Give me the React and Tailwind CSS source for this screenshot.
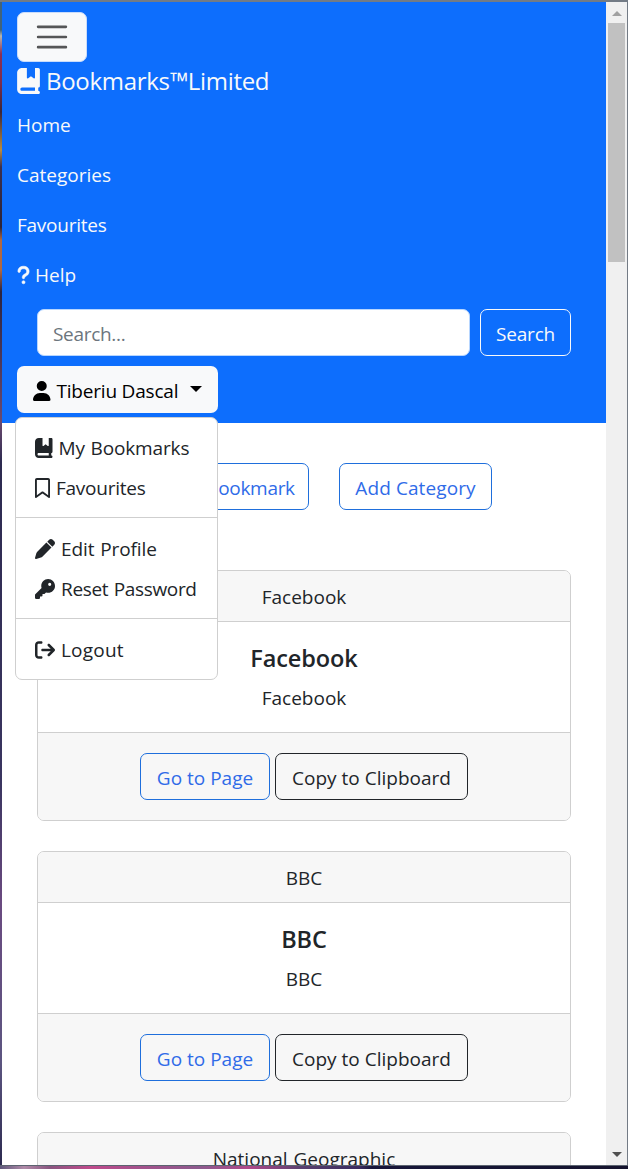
import { FaBookBookmark, FaQuestion, FaUser, FaRegBookmark, FaPen, FaKey, FaArrowRightFromBracket } from "react-icons/fa6";

function Card({ name }) {
  return (
    <article className="flex h-[251px] shrink-0 flex-col overflow-hidden rounded-[7px] border border-[#cfcfcf] bg-white">
      <header className="flex h-[51px] shrink-0 items-center justify-center border-b border-[#cfcfcf] bg-[#f7f7f7] pt-0.5">
        <span>{name}</span>
      </header>
      <div className="flex h-[110px] shrink-0 flex-col items-center pt-[18px]">
        <h5 className="h-9 text-[23.5px] leading-9 font-semibold tracking-[-0.1px]">{name}</h5>
        <p className="h-10 leading-[44px]">{name}</p>
      </div>
      <footer className="flex h-[88px] shrink-0 justify-center gap-[5px] border-t border-[#cfcfcf] bg-[#f7f7f7] pt-5">
        <button className="h-[47px] w-[130px] rounded-[7px] border border-[#1f6fdc] pt-1 text-[#2f6be8]">Go to Page</button>
        <button className="h-[47px] w-[193px] rounded-[7px] border border-[#212529] pt-1">Copy to Clipboard</button>
      </footer>
    </article>
  );
}

function MenuItem({ icon: Icon, iconClass, textClass, children }) {
  return (
    <a className="flex h-10 items-center pl-[19px]">
      <Icon className={iconClass} />
      <span className={textClass}>{children}</span>
    </a>
  );
}

export default function App() {
  return (
    <div className="flex h-[1169px] w-[628px] flex-col overflow-hidden bg-[#737b85] pt-0.5 font-['Open_Sans',sans-serif] text-[19px] tracking-[0px] text-[#212529] [word-spacing:1px]">
      <div className="flex h-[1163px] shrink-0">
        <div className="w-0.5 shrink-0 bg-[linear-gradient(#41637c_0_28px,#b9b5ae_34px,#8b2f55_52px,#7d2c4c_80px,#3b2638_110px,#b98a3e_148px,#3b3050_165px,#2c2438_225px,#b0673f_238px_268px,#2b2440_290px,#6b4a70_420px,#2d2a50_460px,#3a3560_780px,#6a4a80_900px,#5c5580_1060px,#2c2a50)]" />
        <main className="relative flex w-[604px] shrink-0 flex-col overflow-hidden bg-white">
          <nav className="flex h-[421px] shrink-0 flex-col bg-[#0d6efd] px-[15px] pt-2.5 text-[#f8f9fa]">
            <button className="flex h-[50px] w-[70px] shrink-0 items-center justify-center rounded-[7px] border border-[#c9dcfb] bg-[#f8f9fa]">
              <svg viewBox="0 0 30 30" className="h-[38px] w-[38px] fill-none stroke-[#555657] stroke-2 [stroke-linecap:round]">
                <path d="M4 7h22M4 15h22M4 23h22" />
              </svg>
            </button>
            <a className="flex h-[38px] shrink-0 items-center text-[24px] tracking-[-0.3px]">
              <FaBookBookmark className="mr-[6px] h-[26px] w-[23px]" />
              <span>Bookmarks™Limited</span>
            </a>
            <a className="flex h-[50px] shrink-0 items-center">Home</a>
            <a className="flex h-[50px] shrink-0 items-center">Categories</a>
            <a className="flex h-[50px] shrink-0 items-center tracking-[-0.25px]">Favourites</a>
            <a className="flex h-[50px] shrink-0 items-center">
              <FaQuestion className="mr-[5px] h-5 w-[13px] stroke-current stroke-[14]" />
              <span>Help</span>
            </a>
            <form className="mt-[9px] flex h-[47px] shrink-0 gap-2.5 px-5">
              <div className="flex w-[433px] items-center rounded-[7px] border border-[#b7d6ff] bg-white pt-1 pl-[15px] tracking-[-0.3px] text-[#6c757d]">Search...</div>
              <button type="button" className="w-[91px] rounded-[7px] border border-[#f8f9fa] pt-1 tracking-[-0.2px]">Search</button>
            </form>
            <button className="mt-2.5 flex h-[47px] w-[201px] shrink-0 items-center rounded-[7px] bg-[#f8f9fa] pt-0.5 pl-4 text-black">
              <FaUser className="mr-[6px] h-5 w-[17.5px]" />
              <span className="pt-0.5 tracking-[-0.2px]">Tiberiu Dascal</span>
              <svg viewBox="0 0 12 6" className="mb-1 ml-auto mr-4 h-1.5 w-3"><path d="M0 0h12L6 6z" /></svg>
            </button>
          </nav>
          <div className="flex h-[147px] shrink-0 gap-[30px] pt-10 pl-[151px] tracking-[0.1px] text-[#2f6be8]">
            <button className="h-[47px] w-[156px] rounded-[7px] border border-[#1f6fdc] pt-1 tracking-[-0.3px]">Add Bookmark</button>
            <button className="h-[47px] w-[153px] rounded-[7px] border border-[#1f6fdc] pt-1">Add Category</button>
          </div>
          <section className="flex flex-col gap-[30px] px-[35px]">
            <Card name="Facebook" />
            <Card name="BBC" />
            <Card name="National Geographic" />
          </section>
          <div className="absolute top-[415px] left-[13px] flex h-[263px] w-[203px] flex-col rounded-[7px] border border-[#cfcfcf] bg-white pt-2.5">
            <MenuItem icon={FaBookBookmark} iconClass="mr-[6px] h-5 w-[17.5px]" textClass="tracking-[-0.15px]">My Bookmarks</MenuItem>
            <MenuItem icon={FaRegBookmark} iconClass="mr-[6px] h-5 w-[15px]" textClass="tracking-[-0.25px]">Favourites</MenuItem>
            <hr className="mt-[9px] mb-[11px] border-[#cfcfcf]" />
            <MenuItem icon={FaPen} iconClass="mr-[6px] h-5 w-5" textClass="tracking-[-0.1px]">Edit Profile</MenuItem>
            <MenuItem icon={FaKey} iconClass="mr-[6px] h-5 w-5" textClass="tracking-[-0.35px]">Reset Password</MenuItem>
            <hr className="mt-[9px] mb-[11px] border-[#cfcfcf]" />
            <MenuItem icon={FaArrowRightFromBracket} iconClass="mr-[6px] h-5 w-5" textClass="tracking-[0.2px]">Logout</MenuItem>
          </div>
        </main>
        <aside className="flex w-[21px] shrink-0 flex-col items-center bg-[#f0f0f0]">
          <svg viewBox="0 0 10 5" className="mt-[9px] h-[5px] w-2.5 fill-[#a0a0a0]"><path d="M0 5h10L5 0z" /></svg>
          <div className="mt-[7px] h-[239px] w-[17px] bg-[#c1c1c1]" />
          <svg viewBox="0 0 10 5" className="mt-auto mb-2 h-[5px] w-2.5 fill-[#505050]"><path d="M0 0h10L5 5z" /></svg>
        </aside>
      </div>
      <div className="h-1 shrink-0 border-t border-[#5c6470] bg-[linear-gradient(90deg,#5f587c,#b08aa8_24px,#8a5580_50px,#c04a8c_90px,#a8508c_130px,#8d5a8e_200px,#b0488a_250px,#5a4070_300px,#3a2c60_360px,#17163a_372px,#15142e)]" />
    </div>
  );
}
